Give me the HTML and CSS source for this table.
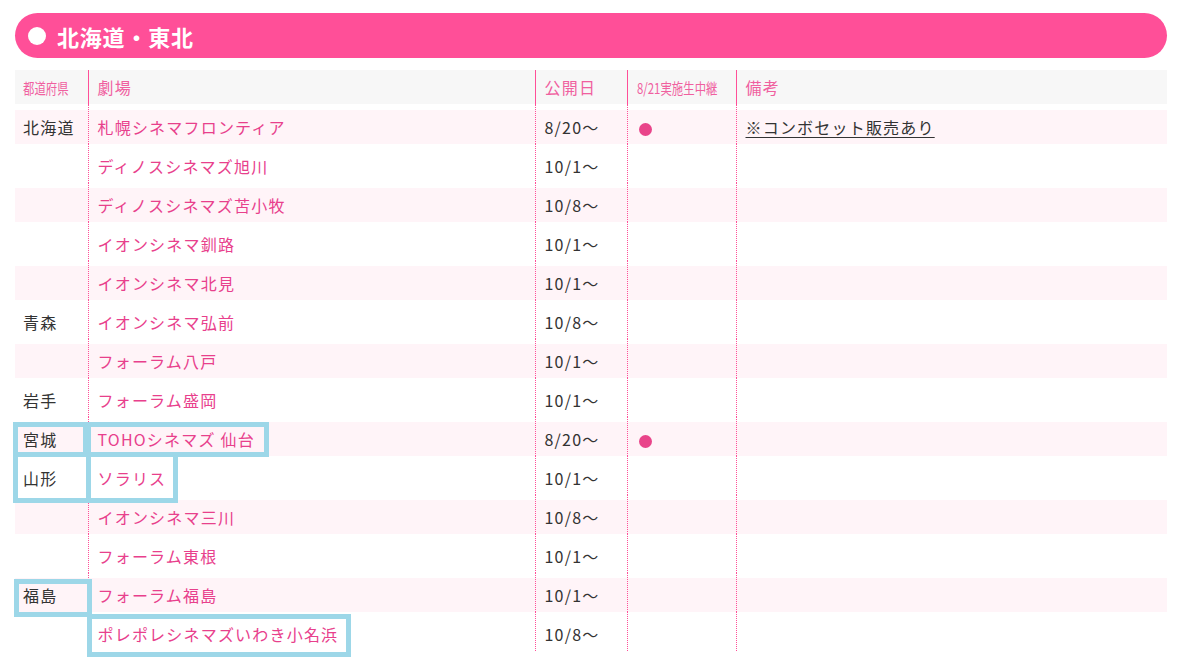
FILE: index.html
```html
<!DOCTYPE html>
<html lang="ja">
<head>
<meta charset="utf-8">
<title>北海道・東北</title>
<link rel="stylesheet" href="styles.css">
</head>
<body>
<div class="page">
  <h2 class="area"><span class="area-dot"></span>北海道・東北</h2>
  <table class="list">
    <colgroup>
      <col class="c1"><col class="c2"><col class="c3"><col class="c4"><col class="c5">
    </colgroup>
    <thead>
      <tr>
        <th><span class="narrow">都道府県</span></th>
        <th>劇場</th>
        <th>公開日</th>
        <th><span class="narrow">8/21実施生中継</span></th>
        <th>備考</th>
      </tr>
    </thead>
    <tbody>
      <tr class="odd"><td>北海道</td><td class="th">札幌シネマフロンティア</td><td>8/20～</td><td><span class="dot"></span></td><td><a class="note" href="#">※コンボセット販売あり</a></td></tr>
      <tr><td></td><td class="th">ディノスシネマズ旭川</td><td>10/1～</td><td></td><td></td></tr>
      <tr class="odd"><td></td><td class="th">ディノスシネマズ苫小牧</td><td>10/8～</td><td></td><td></td></tr>
      <tr><td></td><td class="th">イオンシネマ釧路</td><td>10/1～</td><td></td><td></td></tr>
      <tr class="odd"><td></td><td class="th">イオンシネマ北見</td><td>10/1～</td><td></td><td></td></tr>
      <tr><td>青森</td><td class="th">イオンシネマ弘前</td><td>10/8～</td><td></td><td></td></tr>
      <tr class="odd"><td></td><td class="th">フォーラム八戸</td><td>10/1～</td><td></td><td></td></tr>
      <tr><td>岩手</td><td class="th">フォーラム盛岡</td><td>10/1～</td><td></td><td></td></tr>
      <tr class="odd"><td>宮城</td><td class="th">TOHOシネマズ 仙台</td><td>8/20～</td><td><span class="dot"></span></td><td></td></tr>
      <tr><td>山形</td><td class="th">ソラリス</td><td>10/1～</td><td></td><td></td></tr>
      <tr class="odd"><td></td><td class="th">イオンシネマ三川</td><td>10/8～</td><td></td><td></td></tr>
      <tr><td></td><td class="th">フォーラム東根</td><td>10/1～</td><td></td><td></td></tr>
      <tr class="odd"><td>福島</td><td class="th">フォーラム福島</td><td>10/1～</td><td></td><td></td></tr>
      <tr><td></td><td class="th">ポレポレシネマズいわき小名浜</td><td>10/8～</td><td></td><td></td></tr>
    </tbody>
  </table>

  <div class="mark m1"></div>
  <div class="mark m2"></div>
  <div class="mark m3"></div>
  <div class="mark m4"></div>
  <div class="mark m5"></div>
  <div class="mark m6"></div>
</div>
</body>
</html>
```

FILE: styles.css
```css
html, body {
  margin: 0;
  padding: 0;
  background: #fff;
}
body {
  font-family: "Noto Sans CJK JP", "Noto Sans", sans-serif;
  color: #333;
}
.page {
  position: relative;
  width: 1191px;
  height: 671px;
  padding: 13px 0 0 15px;
  box-sizing: border-box;
  overflow: hidden;
}
.area {
  margin: 0;
  width: 1152px;
  height: 45px;
  border-radius: 23px;
  background: #ff4f98;
  color: #fff;
  font-size: 22px;
  font-weight: bold;
  letter-spacing: 0.8px;
  display: flex;
  align-items: center;
  padding-left: 13px;
  box-sizing: border-box;
  line-height: 1;
}
.area-dot {
  width: 18px;
  height: 18px;
  border-radius: 50%;
  background: #fff;
  margin-right: 11px;
  flex: none;
}
.list {
  margin-top: 12px;
  width: 1152px;
  table-layout: fixed;
  border-collapse: collapse;
  font-size: 16px;
  letter-spacing: 1.2px;
}
.c1 { width: 73px; }
.c2 { width: 447px; }
.c3 { width: 92px; }
.c4 { width: 109px; }
.c5 { width: 431px; }

.list th {
  height: 34px;
  padding: 0 0 0 8px;
  background: #f7f7f7;
  color: #f0609f;
  font-weight: normal;
  text-align: left;
  font-size: 16px;
  white-space: nowrap;
  overflow: visible;
}
.list th + th {
  border-left: 1px solid #ff4f98;
  padding-left: 9px;
}
.narrow {
  display: inline-block;
  font-size: 15px;
  letter-spacing: 0;
  transform: scaleX(0.76);
  transform-origin: left center;
}
.list td {
  height: 39px;
  padding: 4px 0 0 8px;
  box-sizing: border-box;
  white-space: nowrap;
  vertical-align: middle;
}
.list td + td {
  border-left: 1px dotted #ff4f98;
  padding-left: 9px;
}
.list tbody tr:first-child td {
  height: 40px;
  padding-top: 5px;
}
.list tr.odd td {
  background: linear-gradient(to bottom, #fff 5px, #fff4f8 5px);
}
.list tbody tr.odd:first-child td {
  background: linear-gradient(to bottom, #fff 6px, #fff4f8 6px);
}
.list td.th {
  color: #e8408c;
}
.dot {
  display: inline-block;
  width: 13px;
  height: 13px;
  border-radius: 50%;
  background: #e9448a;
  vertical-align: middle;
  margin-left: 2px;
}
.note {
  color: #333;
  text-decoration: underline;
  text-underline-offset: 3px;
}
.mark {
  position: absolute;
  border: 5px solid #9dd7e8;
  box-sizing: border-box;
}
.m1 { left: 13px; top: 422px; width: 75px; height: 35px; }
.m2 { left: 86px; top: 422px; width: 183px; height: 35px; }
.m3 { left: 13px; top: 452px; width: 78px; height: 51px; }
.m4 { left: 86px; top: 452px; width: 92px; height: 51px; }
.m5 { left: 14px; top: 579px; width: 78px; height: 38px; }
.m6 { left: 87px; top: 614px; width: 264px; height: 43px; }
```
